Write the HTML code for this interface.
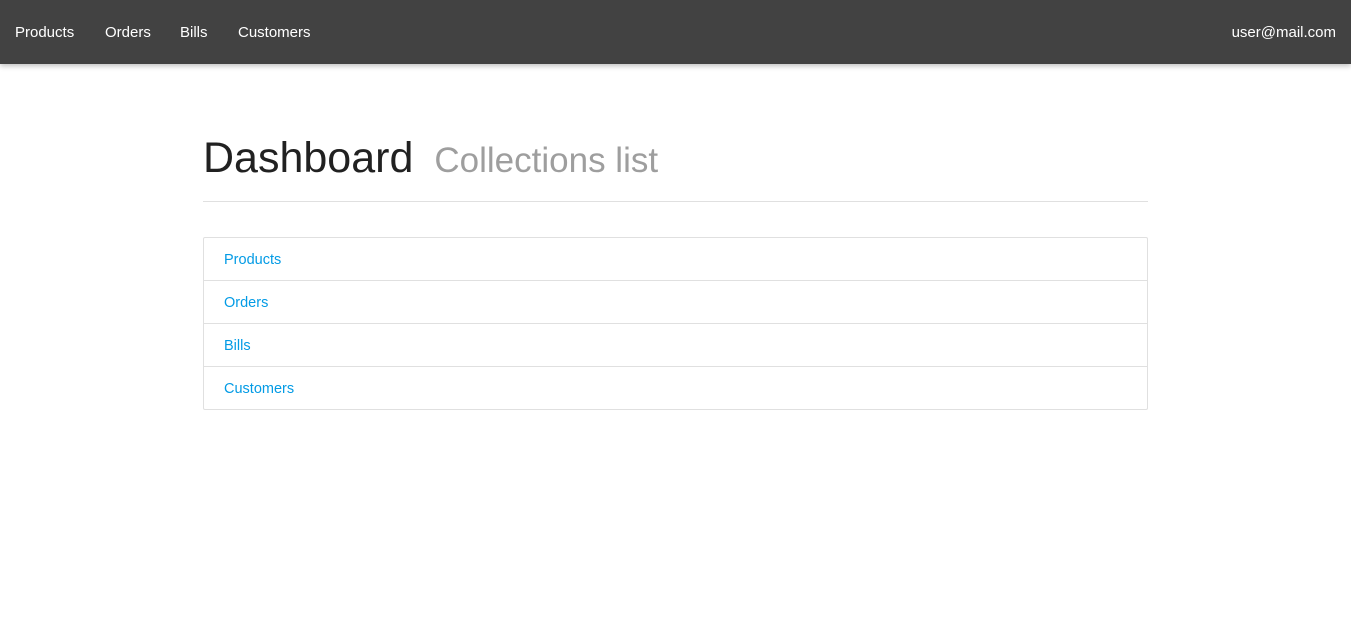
<!DOCTYPE html>
<html><head><style>
body{margin:0;font-family:"Liberation Sans",sans-serif;background:#fff;}
.nav{height:64px;background:#424242;box-shadow:0 2px 5px rgba(0,0,0,.25);position:relative;color:#fff;font-size:15px;}
.nav span{position:absolute;top:24px;}
h1{position:absolute;left:203px;top:134px;margin:0;font-weight:normal;font-size:43px;color:#212121;white-space:nowrap;}
h1 small{font-size:35px;color:#9e9e9e;margin-left:21px;}
.hr{position:absolute;left:203px;top:201px;width:945px;height:1px;background:#e0e0e0;}
.list{position:absolute;left:203px;top:237px;width:943px;border:1px solid #e0e0e0;border-radius:2px;}
.list div{height:42px;line-height:44px;padding-left:20px;color:#039be5;font-size:14.5px;border-top:1px solid #e0e0e0;}
.list div:first-child{border-top:none;}
</style></head><body>
<div class="nav"><span style="left:15px">Products</span><span style="left:105px">Orders</span><span style="left:180px">Bills</span><span style="left:238px">Customers</span><span style="right:15px">user@mail.com</span></div>
<h1>Dashboard<small>Collections list</small></h1>
<div class="hr"></div>
<div class="list"><div>Products</div><div>Orders</div><div>Bills</div><div>Customers</div></div>
</body></html>
